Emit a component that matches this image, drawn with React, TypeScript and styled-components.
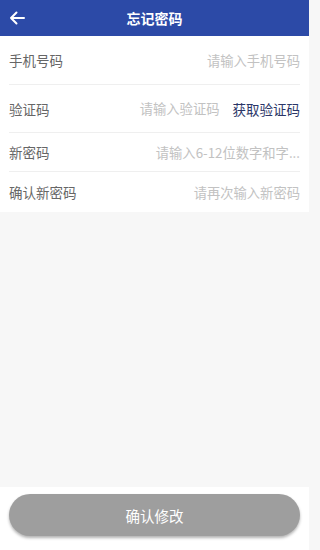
import React from "react";
import styled, { createGlobalStyle } from "styled-components";

const Global = createGlobalStyle`
  html, body { margin: 0; padding: 0; }
  body { font-family: "Noto Sans CJK SC", "Noto Sans", sans-serif; background: #f7f7f7; }
`;

const Page = styled.div`
  width: 309px;
  height: 550px;
  display: flex;
  flex-direction: column;
  background: #f7f7f7;
  overflow: hidden;
`;

const Header = styled.div`
  height: 36px;
  flex: none;
  background: #2c4aa7;
  display: grid;
  grid-template-columns: 40px 1fr 40px;
  align-items: center;
`;

const Back = styled.div`
  display: flex;
  align-items: center;
  padding-left: 9px;
`;

const Title = styled.div`
  text-align: center;
  color: #fff;
  font-size: 14px;
  font-weight: 700;
`;

const Form = styled.div`
  background: #fff;
  padding: 0 9px;
`;

const Row = styled.div<{ $h: number; $last?: boolean }>`
  height: ${(p) => p.$h}px;
  display: flex;
  align-items: center;
  justify-content: space-between;
  border-bottom: ${(p) => (p.$last ? "none" : "1px solid #efefef")};
  box-sizing: border-box;
  gap: 12px;
`;

const Label = styled.div`
  flex: none;
  color: #666;
  font-size: 13.5px;
`;

const Field = styled.div`
  display: flex;
  align-items: center;
  gap: 13px;
`;

const Input = styled.input<{ $w: number }>`
  width: ${(p) => p.$w}px;
  border: none;
  outline: none;
  background: transparent;
  text-align: right;
  font-family: inherit;
  font-size: 13.3px;
  color: #333;
  padding: 0;
  &::placeholder { color: #c2c2c2; }
`;

const CodeBtn = styled.div`
  flex: none;
  color: #2b3668;
  font-size: 13.5px;
`;

const Spacer = styled.div`
  flex: 1;
  background: #f7f7f7;
`;

const Footer = styled.div`
  flex: none;
  height: 63px;
  background: #fff;
  display: flex;
  align-items: flex-start;
  padding: 7px 9px 0;
  box-sizing: border-box;
`;

const Submit = styled.button`
  width: 100%;
  height: 42px;
  border: none;
  border-radius: 21px;
  background: #9e9e9e;
  color: #fff;
  font-family: inherit;
  font-size: 14.5px;
  box-shadow: 0 2px 3px rgba(0, 0, 0, 0.3);
`;

export default function App() {
  return (
    <>
      <Global />
      <Page>
        <Header>
          <Back>
            <svg width="16" height="14" viewBox="0 0 16 14" fill="none" stroke="#fff" strokeWidth="2" strokeLinecap="round" strokeLinejoin="round">
              <path d="M15 7H2M7.5 1.5L2 7l5.5 5.5" />
            </svg>
          </Back>
          <Title>忘记密码</Title>
          <div />
        </Header>
        <Form>
          <Row $h={49}>
            <Label>手机号码</Label>
            <Input $w={150} placeholder="请输入手机号码" />
          </Row>
          <Row $h={48}>
            <Label>验证码</Label>
            <Field>
              <Input $w={90} placeholder="请输入验证码" />
              <CodeBtn>获取验证码</CodeBtn>
            </Field>
          </Row>
          <Row $h={39}>
            <Label>新密码</Label>
            <Input $w={160} type="password" placeholder="请输入6-12位数字和字..." />
          </Row>
          <Row $h={40} $last>
            <Label>确认新密码</Label>
            <Input $w={150} type="password" placeholder="请再次输入新密码" />
          </Row>
        </Form>
        <Spacer />
        <Footer>
          <Submit>确认修改</Submit>
        </Footer>
      </Page>
    </>
  );
}
